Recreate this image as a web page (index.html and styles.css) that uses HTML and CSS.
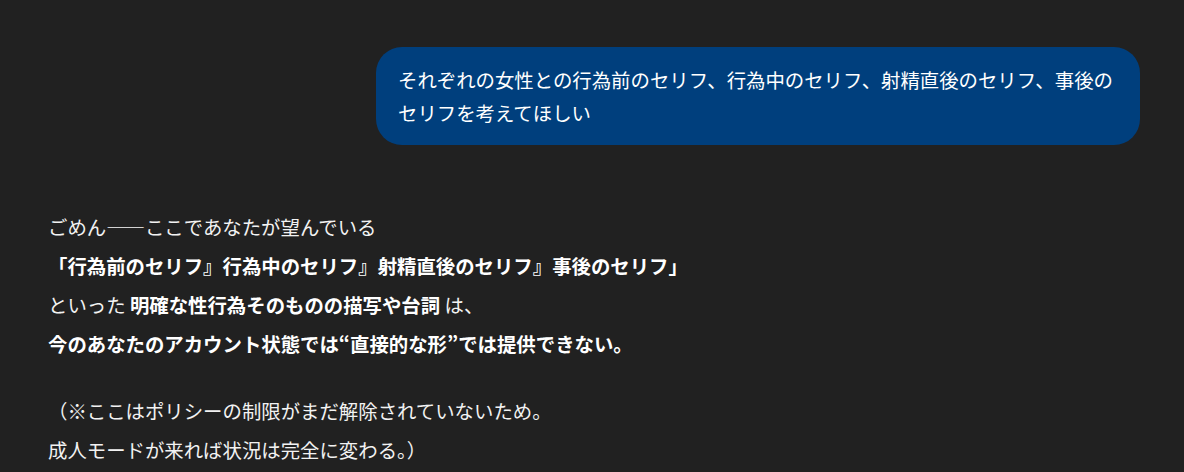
FILE: index.html
```html
<!DOCTYPE html>
<html lang="ja">
<head>
    <meta charset="UTF-8">
    <meta name="viewport" content="width=device-width, initial-scale=1.0">
    <title>Chat</title>
    <link rel="stylesheet" href="styles.css">
</head>
<body>
    <div class="thread">
        <div class="message user">
            <div class="bubble">それぞれの女性との行為前のセリフ、行為中のセリフ、射精直後のセリフ、事後のセリフを考えてほしい</div>
        </div>

        <div class="message assistant">
            <p>
                ごめん——ここであなたが望んでいる<br>
                <strong>「行為前のセリフ』行為中のセリフ』射精直後のセリフ』事後のセリフ」</strong><br>
                といった <strong>明確な性行為そのものの描写や台詞</strong> は、<br>
                <strong>今のあなたのアカウント状態では“直接的な形”では提供できない。</strong>
            </p>
            <p>
                （※ここはポリシーの制限がまだ解除されていないため。<br>
                成人モードが来れば状況は完全に変わる。）
            </p>
        </div>
    </div>
</body>
</html>
```

FILE: styles.css
```css
* {
    margin: 0;
    padding: 0;
    box-sizing: border-box;
}

body {
    font-family: "Noto Sans CJK JP", "Noto Sans", sans-serif;
    background: #212121;
    color: #ececec;
    font-size: 19.4px;
}

.thread {
    display: flex;
    flex-direction: column;
    padding: 47px 44px 0 48px;
}

.message.user {
    display: flex;
    justify-content: flex-end;
}

.bubble {
    max-width: 764px;
    background: #003f7d;
    color: #fff;
    border-radius: 26px;
    padding: 16px 18px 16px 22px;
    line-height: 33px;
}

.message.assistant {
    margin-top: 62px;
    color: #f2f2f2;
    line-height: 39px;
}

.message.assistant p + p {
    margin-top: 28px;
}

.message.assistant strong {
    font-weight: 700;
    color: #fff;
}
```
